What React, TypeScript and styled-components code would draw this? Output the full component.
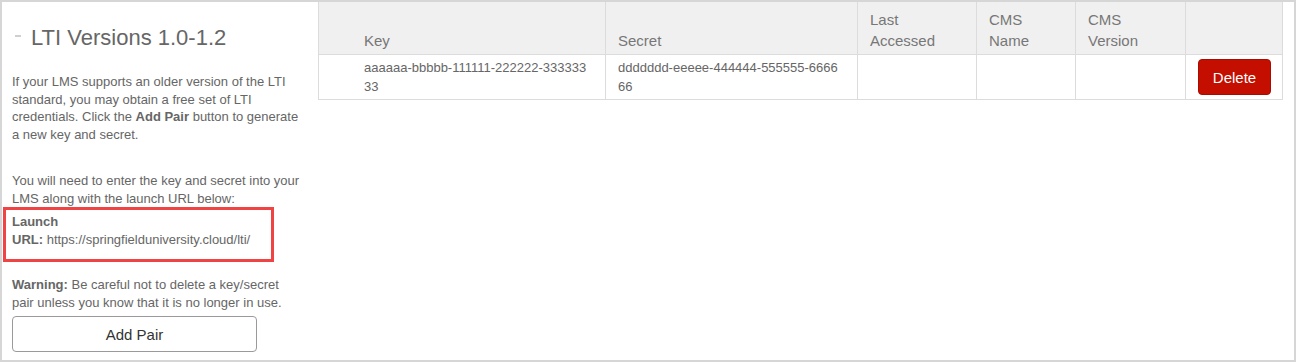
import styled, { createGlobalStyle } from "styled-components";

const GlobalStyle = createGlobalStyle`
  body {
    margin: 0;
    background: #fff;
    font-family: "Liberation Sans", Arial, sans-serif;
  }
`;

const Frame = styled.main`
  width: 1296px;
  height: 362px;
  box-sizing: border-box;
  border: 2px solid #d6d6d6;
  background: #fff;
  display: flex;
  align-items: flex-start;
  overflow: hidden;
`;

const Sidebar = styled.aside`
  width: 316px;
  flex: none;
  box-sizing: border-box;
  padding: 0 16px 0 10px;
  color: #666;
  font-size: 13px;
  line-height: 17.5px;
`;

const Heading = styled.h2`
  margin: 23px 0 0;
  font-size: 22px;
  line-height: 26px;
  font-weight: normal;
  color: #666;
  display: flex;
  align-items: center;
  white-space: nowrap;
`;

const Toggle = styled.span`
  display: inline-block;
  width: 6px;
  height: 2px;
  margin: 0 10px 0 3px;
  background: #cfcfcf;
  position: relative;
  top: -2px;
`;

const Para = styled.p<{ $gap: number }>`
  margin: ${(p) => p.$gap}px 0 0;
`;

const Highlight = styled.div`
  margin: 0 0 0 -9px;
  width: 271px;
  box-sizing: border-box;
  border: 3px solid #f04343;
  padding: 3px 6px 11px;
`;

const Button = styled.button`
  display: block;
  margin-top: 5px;
  width: 245px;
  height: 36px;
  border: 1px solid #9a9a9a;
  border-radius: 4px;
  background: #fff;
  color: #333;
  font-family: inherit;
  font-size: 15px;
`;

const TableArea = styled.section`
  flex: 1;
  padding-right: 12px;
`;

const Table = styled.table`
  width: 100%;
  table-layout: fixed;
  border-collapse: collapse;
  font-size: 13px;
  border: 1px solid #dcdcdc;
  border-top: none;
`;

const Th = styled.th`
  background: #f0f0f0;
  color: #777;
  font-size: 15px;
  line-height: 21px;
  font-weight: normal;
  text-align: left;
  vertical-align: bottom;
  padding: 7px 12px 3px;
  border-left: 1px solid #dcdcdc;
  border-bottom: 1px solid #dcdcdc;
  &:first-child {
    padding-left: 45px;
  }
`;

const Td = styled.td<{ $padRight?: number }>`
  color: #666;
  line-height: 18.5px;
  vertical-align: top;
  padding: 4px ${(p) => p.$padRight ?? 12}px 3px 12px;
  border-left: 1px solid #dcdcdc;
  word-break: break-all;
  &:first-child {
    padding-left: 45px;
  }
`;

const DeleteButton = styled.button`
  width: 73px;
  height: 36px;
  border: 1px solid #a80c00;
  border-radius: 4px;
  background: #c40e00;
  color: #fff;
  font-family: inherit;
  font-size: 15px;
  padding: 0;
`;

const columns = [
  { label: "Key", width: 287 },
  { label: "Secret", width: 252 },
  { label: "Last Accessed", width: 119 },
  { label: "CMS Name", width: 99 },
  { label: "CMS Version", width: 110 },
  { label: "", width: 97 },
];

const pairs = [
  {
    key: "aaaaaa-bbbbb-111111-222222-33333333",
    secret: "ddddddd-eeeee-444444-555555-666666",
    accessed: "",
    cmsName: "",
    cmsVersion: "",
  },
];

function App() {
  return (
    <>
      <GlobalStyle />
      <Frame>
        <Sidebar>
          <Heading>
            <Toggle />
            LTI Versions 1.0-1.2
          </Heading>
          <Para $gap={22}>
            If your LMS supports an older version of the LTI standard, you may
            obtain a free set of LTI credentials. Click the <b>Add Pair</b>{" "}
            button to generate a new key and secret.
          </Para>
          <Para $gap={29}>
            You will need to enter the key and secret into your LMS along with
            the launch URL below:
          </Para>
          <Highlight>
            <b>Launch</b>
            <br />
            <b>URL:</b> https://springfielduniversity.cloud/lti/
          </Highlight>
          <Para $gap={14}>
            <b>Warning:</b> Be careful not to delete a key/secret pair unless
            you know that it is no longer in use.
          </Para>
          <Button>Add Pair</Button>
        </Sidebar>
        <TableArea>
          <Table>
            <colgroup>
              {columns.map((c, i) => (
                <col key={i} style={{ width: c.width }} />
              ))}
            </colgroup>
            <thead>
              <tr>
                {columns.map((c, i) => (
                  <Th key={i}>
                    {c.label.split(" ").map((w, j) => (
                      <span key={j}>
                        {j > 0 && <br />}
                        {w}
                      </span>
                    ))}
                  </Th>
                ))}
              </tr>
            </thead>
            <tbody>
              {pairs.map((p) => (
                <tr key={p.key}>
                  <Td>{p.key}</Td>
                  <Td $padRight={17}>{p.secret}</Td>
                  <Td>{p.accessed}</Td>
                  <Td>{p.cmsName}</Td>
                  <Td>{p.cmsVersion}</Td>
                  <Td>
                    <DeleteButton>Delete</DeleteButton>
                  </Td>
                </tr>
              ))}
            </tbody>
          </Table>
        </TableArea>
      </Frame>
    </>
  );
}

export default App;
